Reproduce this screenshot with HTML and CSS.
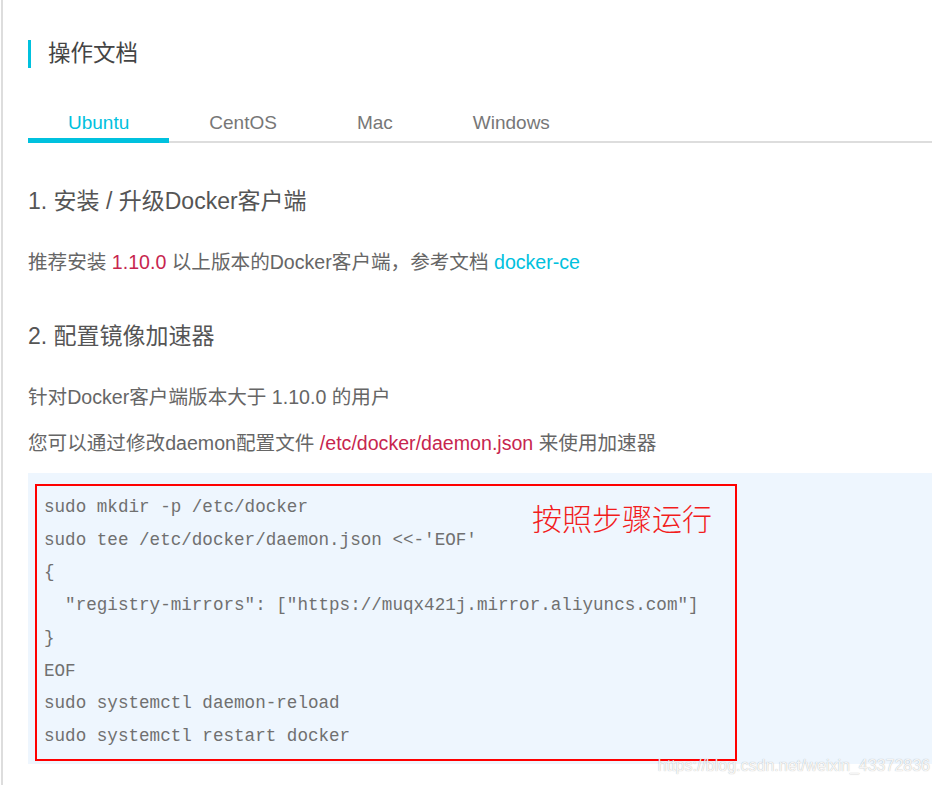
FILE: index.html
```html
<!DOCTYPE html>
<html lang="zh-CN">
<head>
  <meta charset="UTF-8">
  <meta name="viewport" content="width=device-width, initial-scale=1.0">
  <title>操作文档</title>
  <link rel="stylesheet" href="styles.css">
</head>
<body>
  <div class="page">
    <h2 class="title">操作文档</h2>

    <ul class="tabs">
      <li class="tab active">Ubuntu</li>
      <li class="tab">CentOS</li>
      <li class="tab">Mac</li>
      <li class="tab">Windows</li>
    </ul>

    <h3 class="step first">1. 安装 / 升级Docker客户端</h3>
    <p class="text first-text">推荐安装 <span class="hl">1.10.0</span> 以上版本的Docker客户端，参考文档 <a class="link">docker-ce</a></p>

    <h3 class="step second">2. 配置镜像加速器</h3>
    <p class="text first-text">针对Docker客户端版本大于 1.10.0 的用户</p>
    <p class="text">您可以通过修改daemon配置文件 <span class="hl">/etc/docker/daemon.json</span> 来使用加速器</p>

    <div class="code">
      <div class="mark">
<pre>sudo mkdir -p /etc/docker
sudo tee /etc/docker/daemon.json &lt;&lt;-'EOF'
{
  "registry-mirrors": ["https://muqx421j.mirror.aliyuncs.com"]
}
EOF
sudo systemctl daemon-reload
sudo systemctl restart docker</pre>
        <span class="note">按照步骤运行</span>
      </div>
    </div>

    <span class="watermark">https://blog.csdn.net/weixin_43372836</span>
  </div>
</body>
</html>
```

FILE: styles.css
```css
body {
  margin: 0;
  background: #fff;
  font-family: "Liberation Sans", "Noto Sans CJK SC", sans-serif;
  color: #666;
}
.page {
  position: relative;
  margin-left: 1px;
  border-left: 2px solid #ddd;
  min-height: 785px;
  box-sizing: border-box;
  padding: 40px 9px 0 25px;
}
.title {
  margin: 0;
  border-left: 3px solid #00c1de;
  padding-left: 17px;
  font-size: 22.5px;
  font-weight: normal;
  line-height: 28px;
  color: #444;
}
.tabs {
  display: flex;
  list-style: none;
  margin: 40px 0 0;
  padding: 0;
  border-bottom: 2px solid #ddd;
}
.tab {
  padding: 0 40px;
  line-height: 30px;
  font-size: 19px;
  color: #777;
  margin-bottom: -2px;
  border-bottom: 5px solid transparent;
}
.tab.active {
  color: #00c1de;
  border-bottom-color: #00c1de;
}
.step {
  margin: 0;
  font-size: 23px;
  font-weight: normal;
  line-height: 32px;
  color: #555;
}
.step.first {
  margin-top: 42px;
}
.step.second {
  margin-top: 43px;
}
.text {
  margin: 16px 0 0;
  font-size: 19.6px;
  line-height: 30px;
  color: #666;
}
.text.first-text {
  margin-top: 30px;
}
.hl {
  color: #c7254e;
}
.link {
  color: #00c1de;
}
.code {
  margin-top: 15px;
  background: #eef6fe;
  padding: 11px 0 3px 7px;
}
.mark {
  position: relative;
  width: 698px;
  border: 2px solid #f00;
}
.mark pre {
  margin: 0;
  padding: 5px 0 6px 7px;
  font-family: "Liberation Mono", monospace;
  font-size: 17.6px;
  line-height: 32.7px;
  color: #707070;
}
.note {
  position: absolute;
  top: 16px;
  right: 23px;
  font-family: "Noto Sans CJK SC", sans-serif;
  font-weight: 300;
  font-size: 30px;
  line-height: 30px;
  color: #f21c1c;
}
.watermark {
  position: absolute;
  right: 11px;
  bottom: 9px;
  font-size: 16px;
  line-height: 20px;
  color: rgba(255, 255, 255, 0.9);
  text-shadow: 0 0 1px rgba(0, 0, 0, 0.35);
}
```
